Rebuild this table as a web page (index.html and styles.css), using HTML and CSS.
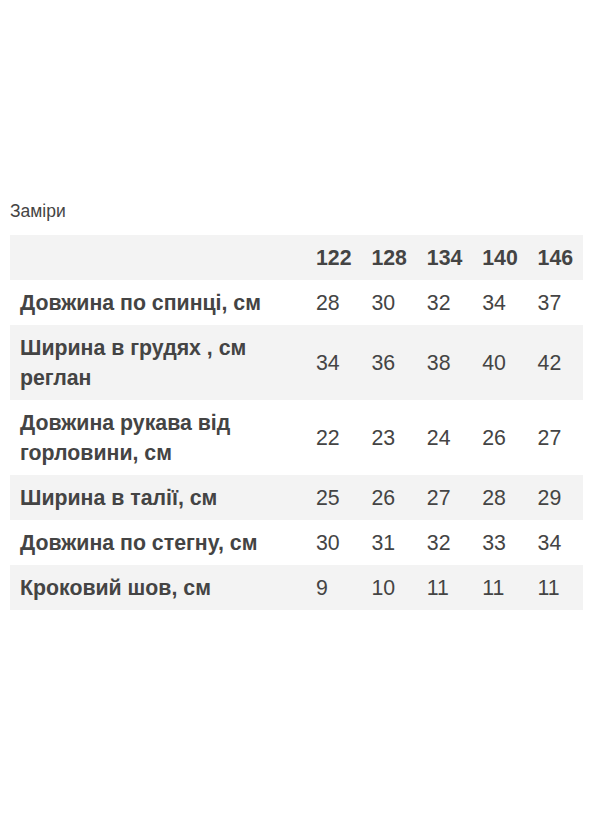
FILE: index.html
```html
<!DOCTYPE html>
<html lang="uk">
<head>
<meta charset="utf-8">
<link rel="stylesheet" href="styles.css">
</head>
<body>
<div class="page">
  <p class="caption">Заміри</p>
  <table class="sizes">
    <colgroup>
      <col class="c-label">
      <col class="c-num"><col class="c-num"><col class="c-num"><col class="c-num"><col class="c-num">
    </colgroup>
    <tr class="head"><th></th><th>122</th><th>128</th><th>134</th><th>140</th><th>146</th></tr>
    <tr><th>Довжина по спинці, см</th><td>28</td><td>30</td><td>32</td><td>34</td><td>37</td></tr>
    <tr><th>Ширина в грудях , см реглан</th><td>34</td><td>36</td><td>38</td><td>40</td><td>42</td></tr>
    <tr><th>Довжина рукава від горловини, см</th><td>22</td><td>23</td><td>24</td><td>26</td><td>27</td></tr>
    <tr><th>Ширина в талії, см</th><td>25</td><td>26</td><td>27</td><td>28</td><td>29</td></tr>
    <tr><th>Довжина по стегну, см</th><td>30</td><td>31</td><td>32</td><td>33</td><td>34</td></tr>
    <tr><th>Кроковий шов, см</th><td>9</td><td>10</td><td>11</td><td>11</td><td>11</td></tr>
  </table>
</div>
</body>
</html>
```

FILE: styles.css
```css
html, body {
  margin: 0;
  padding: 0;
  background: #ffffff;
}
.page {
  padding: 200px 15px 0 10px;
  font-family: "Liberation Sans", Arial, sans-serif;
  color: #444444;
}
.caption {
  margin: 0 0 12px 0;
  font-size: 17.5px;
  line-height: 23px;
}
.sizes {
  border-collapse: collapse;
  width: 573px;
  table-layout: fixed;
}
.c-label { width: 296px; }
.c-num { width: 55.4px; }
.sizes th, .sizes td {
  padding: 7.5px 0 7.5px 10px;
  font-size: 21.3px;
  line-height: 30px;
  text-align: left;
  vertical-align: middle;
  color: #444444;
}
.sizes th { font-weight: bold; }
.sizes td { font-weight: normal; }
.sizes tr:nth-child(odd) { background: #f3f3f3; }
.sizes tr:nth-child(even) { background: #ffffff; }
```
